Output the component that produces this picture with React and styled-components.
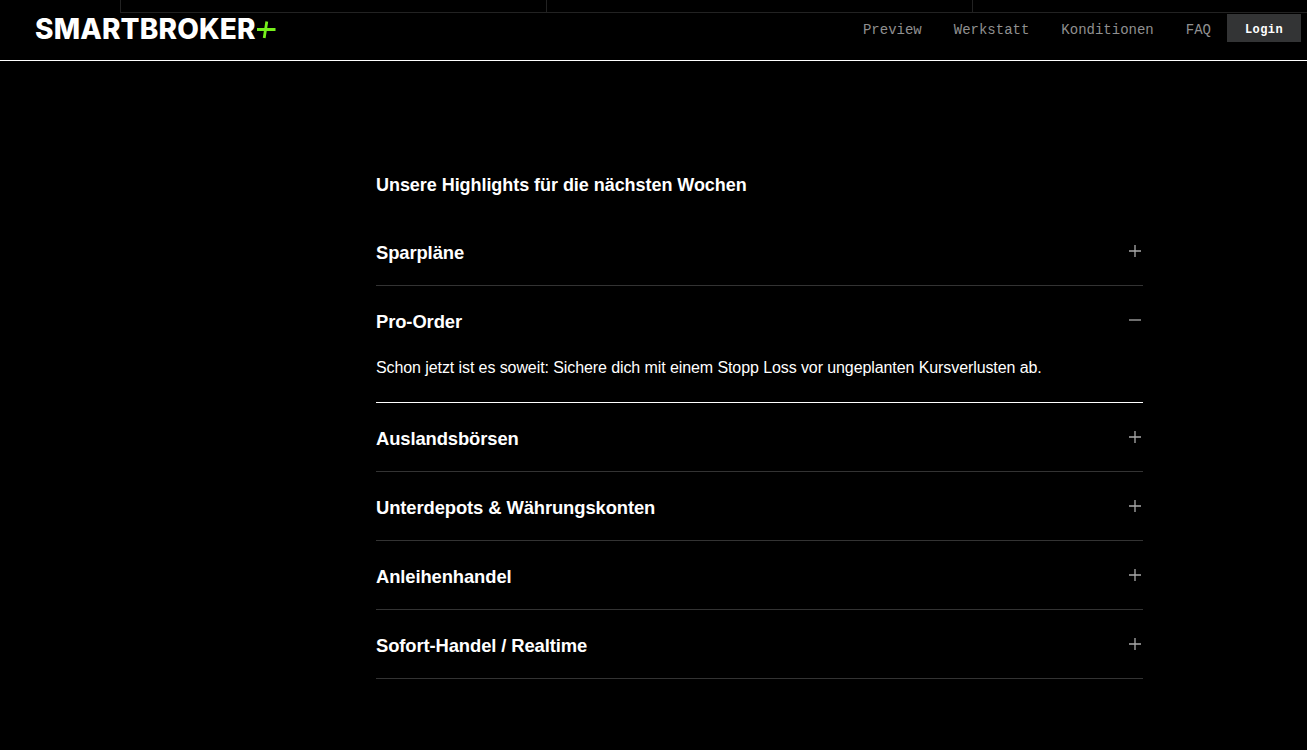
import { useState } from "react";
import styled, { createGlobalStyle } from "styled-components";

const GlobalStyle = createGlobalStyle`
  html, body {
    margin: 0;
    padding: 0;
    background: #000;
    color: #fff;
    font-family: "Liberation Sans", Arial, sans-serif;
  }
`;

const Page = styled.div`
  min-height: 750px;
  background: #000;
  overflow: hidden;
`;

const Header = styled.header`
  position: relative;
  height: 60px;
  padding: 0 6px 0 35px;
  border-bottom: 1px solid #fff;
  display: flex;
  justify-content: space-between;
  align-items: center;
`;

const TopGrid = styled.div`
  position: absolute;
  top: 0;
  left: 120px;
  right: 0;
  height: 12px;
  border-left: 1px solid #222;
  border-bottom: 1px solid #222;
  display: grid;
  grid-template-columns: 425px 426px 1fr;

  div + div {
    border-left: 1px solid #222;
  }
`;

const Logo = styled.a`
  display: flex;
  align-items: center;
  font-family: Inter, sans-serif;
  font-weight: 800;
  font-size: 28px;
  line-height: 1;
  letter-spacing: 0.15px;
  color: #fff;
  margin-top: -2px;

  svg {
    margin-left: -1px;
  }
`;

const Nav = styled.nav`
  display: flex;
  align-items: center;
  margin-top: -4px;
`;

const NavLink = styled.a`
  font-family: "Liberation Mono", monospace;
  font-size: 14px;
  color: #909090;
  margin-right: 32px;
  padding-top: 3px;

  &:nth-last-child(2) {
    margin-right: 16px;
  }
`;

const LoginButton = styled.button`
  width: 74px;
  height: 28px;
  padding: 3px 0 0;
  border: 0;
  background: #333435;
  color: #fff;
  font-family: "Liberation Mono", monospace;
  font-weight: 700;
  font-size: 12px;
  letter-spacing: 0.4px;
`;

const Main = styled.main`
  width: 767px;
  margin-left: 376px;
  padding-top: 112px;
`;

const Title = styled.h2`
  margin: 0 0 20px;
  font-size: 18px;
  line-height: 24px;
  font-weight: 700;
  letter-spacing: -0.05px;
`;

const Item = styled.section`
  border-bottom: 1px solid ${(p) => (p.$open ? "#fff" : "#333")};
`;

const ItemHead = styled.div`
  height: 68px;
  display: flex;
  justify-content: space-between;
  align-items: center;
  cursor: pointer;
`;

const ItemTitle = styled.h3`
  margin: 4px 0 0;
  font-size: 18.4px;
  font-weight: 700;
  letter-spacing: -0.1px;
`;

const ItemBody = styled.p`
  margin: 3px 0 0;
  padding: 0 0 23px;
  font-size: 16px;
  line-height: 22px;
  letter-spacing: -0.09px;
`;

const Toggle = styled.svg`
  width: 12px;
  height: 12px;
  margin: -1px 2px 0 0;
  stroke: #aaa;
  stroke-width: 1.3;
  fill: none;
`;

const items = [
  { title: "Sparpläne" },
  {
    title: "Pro-Order",
    text: "Schon jetzt ist es soweit: Sichere dich mit einem Stopp Loss vor ungeplanten Kursverlusten ab.",
  },
  { title: "Auslandsbörsen" },
  { title: "Unterdepots & Währungskonten" },
  { title: "Anleihenhandel" },
  { title: "Sofort-Handel / Realtime" },
];

export default function App() {
  const [open, setOpen] = useState(1);

  return (
    <Page>
      <GlobalStyle />
      <Header>
        <TopGrid>
          <div />
          <div />
          <div />
        </TopGrid>
        <Logo>
          SMARTBROKER
          <svg width="21" height="20" viewBox="0 0 21 20" fill="none" stroke="#76f01c" strokeWidth="2.8">
            <path d="M2 10.5h18.5M11.8 2.5 9.2 19" />
          </svg>
        </Logo>
        <Nav>
          <NavLink>Preview</NavLink>
          <NavLink>Werkstatt</NavLink>
          <NavLink>Konditionen</NavLink>
          <NavLink>FAQ</NavLink>
          <LoginButton>Login</LoginButton>
        </Nav>
      </Header>
      <Main>
        <Title>Unsere Highlights für die nächsten Wochen</Title>
        {items.map((item, i) => (
          <Item key={item.title} $open={open === i}>
            <ItemHead onClick={() => setOpen(open === i ? -1 : i)}>
              <ItemTitle>{item.title}</ItemTitle>
              <Toggle viewBox="0 0 12 12">
                <path d={open === i ? "M0 6h12" : "M0 6h12M6 0v12"} />
              </Toggle>
            </ItemHead>
            {open === i && <ItemBody>{item.text}</ItemBody>}
          </Item>
        ))}
      </Main>
    </Page>
  );
}
